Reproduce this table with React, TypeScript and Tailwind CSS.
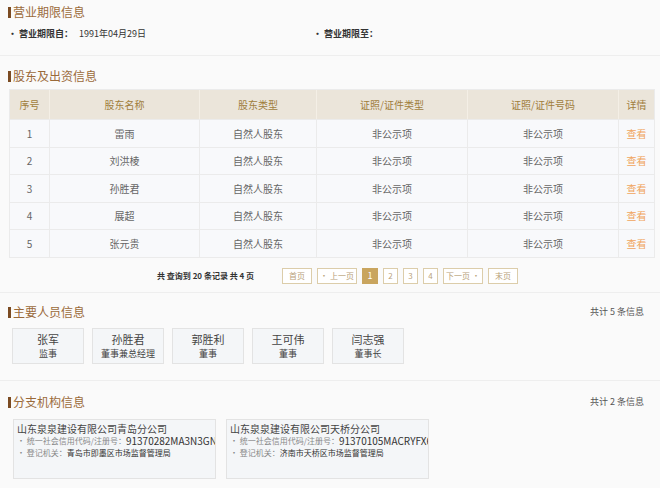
import React from "react"

const SHAREHOLDERS = [
  { no: 1, name: "雷雨" },
  { no: 2, name: "刘洪棱" },
  { no: 3, name: "孙胜君" },
  { no: 4, name: "展超" },
  { no: 5, name: "张元贵" },
]

const STAFF = [
  { name: "张军", role: "监事" },
  { name: "孙胜君", role: "董事兼总经理" },
  { name: "郭胜利", role: "董事" },
  { name: "王可伟", role: "董事" },
  { name: "闫志强", role: "董事长" },
]

const BRANCHES = [
  {
    name: "山东泉泉建设有限公司青岛分公司",
    code: "91370282MA3N3GNM",
    org: "青岛市即墨区市场监督管理局",
  },
  {
    name: "山东泉泉建设有限公司天桥分公司",
    code: "91370105MACRYFX69",
    org: "济南市天桥区市场监督管理局",
  },
]

const PAGES = ["首页", "• 上一页", "1", "2", "3", "4", "下一页 •", "末页"]

function Title({ children }: { children: React.ReactNode }) {
  return (
    <div className="flex items-center text-[12px] leading-[14px] text-[#9a6a3a]">
      <span className="w-[3px] h-[11px] bg-[#7b4b22] mr-[2px]" />
      {children}
    </div>
  )
}

export default function App() {
  return (
    <div
      className="w-[660px] h-[488px] overflow-hidden bg-[#fafafa] text-[#333]"
      style={{ fontFamily: '"Noto Sans CJK SC", "Noto Sans", sans-serif' }}
    >
      {/* 营业期限 */}
      <div className="h-[56px] pl-[8px] pt-[5px] border-b border-[#eeeeee]">
        <Title>营业期限信息</Title>
        <div className="flex mt-[8px] text-[9px] leading-[14px]">
          <div className="w-[305px] flex">
            <span className="font-bold">· 营业期限自：</span>
            <span className="ml-[6px]">1991年04月29日</span>
          </div>
          <span className="font-bold">· 营业期限至：</span>
        </div>
      </div>

      {/* 股东及出资 */}
      <div className="h-[237px] pl-[8px] pt-[13px] border-b border-[#eeeeee]">
        <Title>股东及出资信息</Title>
        <div className="mt-[6px] ml-[1px] w-[646px] border border-[#ebebeb] text-[10px]">
          <div className="flex h-[29px] bg-[#ebe5da] text-[#a07d3c] items-center">
            <div className="w-[39px] text-center">序号</div>
            <div className="w-[150px] text-center border-l border-[#f4efe6] h-full flex items-center justify-center">股东名称</div>
            <div className="w-[117px] text-center border-l border-[#f4efe6] h-full flex items-center justify-center">股东类型</div>
            <div className="w-[151px] text-center border-l border-[#f4efe6] h-full flex items-center justify-center">证照/证件类型</div>
            <div className="w-[151px] text-center border-l border-[#f4efe6] h-full flex items-center justify-center">证照/证件号码</div>
            <div className="flex-1 text-center border-l border-[#f4efe6] h-full flex items-center justify-center">详情</div>
          </div>
          {SHAREHOLDERS.map((s) => (
            <div key={s.no} className="flex h-[27.5px] bg-[#f8f9fb] border-t border-[#ebebeb] text-[#666] items-center">
              <div className="w-[39px] text-center">{s.no}</div>
              <div className="w-[150px] h-full flex items-center justify-center border-l border-[#ebebeb]">{s.name}</div>
              <div className="w-[117px] h-full flex items-center justify-center border-l border-[#ebebeb]">自然人股东</div>
              <div className="w-[151px] h-full flex items-center justify-center border-l border-[#ebebeb]">非公示项</div>
              <div className="w-[151px] h-full flex items-center justify-center border-l border-[#ebebeb]">非公示项</div>
              <div className="flex-1 h-full flex items-center justify-center border-l border-[#ebebeb] text-[#f0a55c]">查看</div>
            </div>
          ))}
        </div>
        <div className="flex items-center mt-[10px] h-[17px]">
          <span className="ml-[149px] w-[125px] text-[8px] text-[#333] font-semibold">共 查询到 20 条记录 共 4 页</span>
          <div className="flex gap-[5px]">
            {PAGES.map((p) =>
              p === "1" ? (
                <span key={p} className="w-[16px] h-[16px] bg-[#c9a55e] text-white text-[9px] flex items-center justify-center">1</span>
              ) : (
                <span
                  key={p}
                  className={`h-[16px] border border-[#dccdaa] text-[#b9a27a] bg-white text-[8px] flex items-center justify-center ${
                    p.length === 1 ? "w-[15px]" : p.length === 2 ? "w-[30px]" : "w-[40px]"
                  }`}
                >
                  {p}
                </span>
              )
            )}
          </div>
        </div>
      </div>

      {/* 主要人员 */}
      <div className="h-[88px] pl-[8px] pr-[16px] pt-[12px] border-b border-[#eeeeee]">
        <div className="flex justify-between items-center">
          <Title>主要人员信息</Title>
          <span className="text-[9px] text-[#555]">共计 5 条信息</span>
        </div>
        <div className="flex gap-[8px] mt-[9px] ml-[4px]">
          {STAFF.map((p) => (
            <div key={p.name} className="w-[72px] h-[36px] bg-[#f4f6f8] border border-[#e3e3e3] flex flex-col items-center justify-center">
              <div className="text-[11px] leading-[15px] text-[#444]">{p.name}</div>
              <div className="text-[9px] leading-[13px] text-[#444]">{p.role}</div>
            </div>
          ))}
        </div>
      </div>

      {/* 分支机构 */}
      <div className="pl-[8px] pr-[16px] pt-[14px]">
        <div className="flex justify-between items-center">
          <Title>分支机构信息</Title>
          <span className="text-[9px] text-[#555]">共计 2 条信息</span>
        </div>
        <div className="flex gap-[10px] mt-[10px] ml-[5px]">
          {BRANCHES.map((b) => (
            <div key={b.name} className="w-[203px] h-[60px] bg-[#f4f6f8] border border-[#e3e3e3] px-[3px] pt-[2px] overflow-hidden">
              <div className="text-[10px] leading-[13px] text-[#444]">{b.name}</div>
              <div className="flex items-center whitespace-nowrap text-[8px] leading-[12px] text-[#888]">
                · 统一社会信用代码/注册号：<span className="text-[10px] text-[#333]">{b.code}</span>
              </div>
              <div className="whitespace-nowrap text-[8px] leading-[11px] text-[#888]">
                · 登记机关：<span className="text-[#333]">{b.org}</span>
              </div>
            </div>
          ))}
        </div>
      </div>
    </div>
  )
}
